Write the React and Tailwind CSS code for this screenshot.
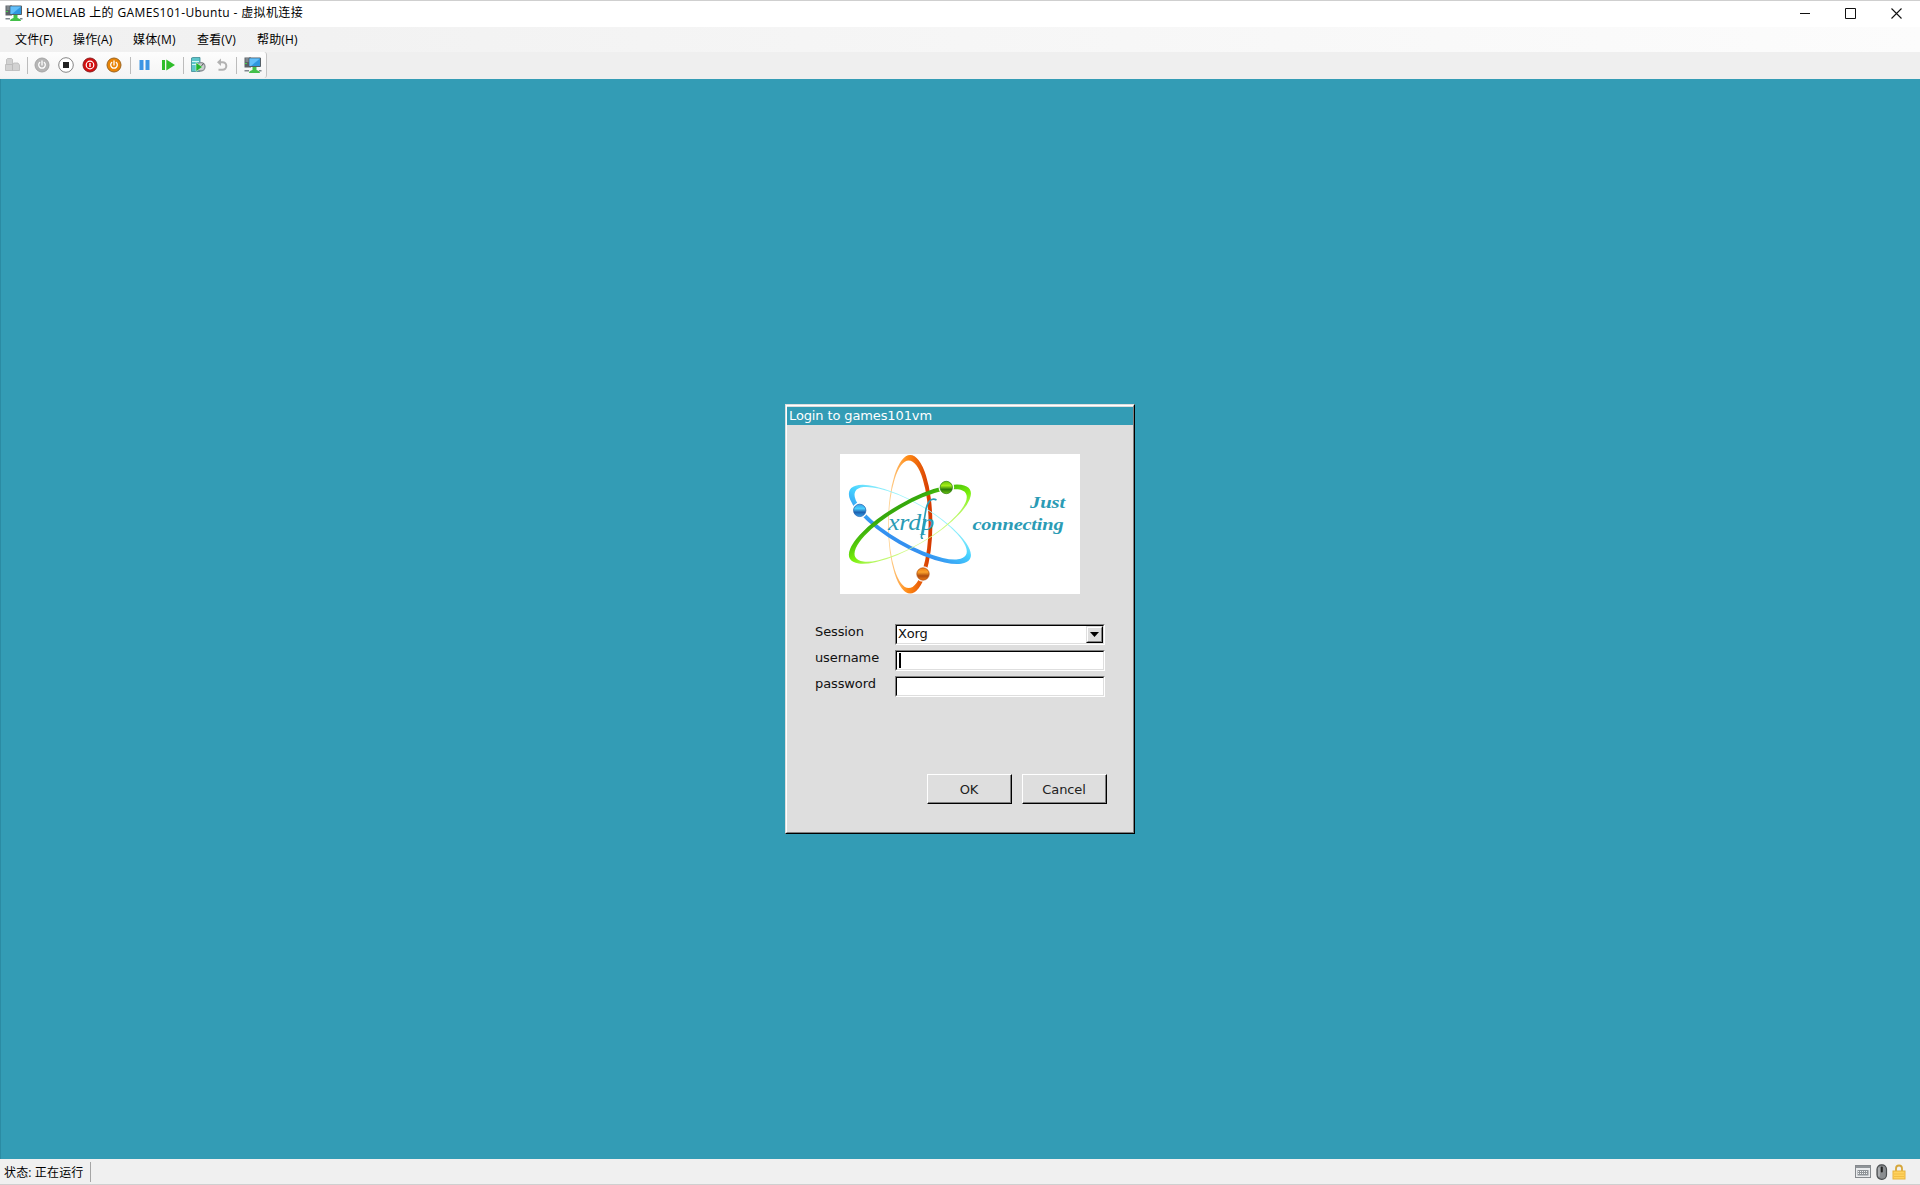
const ui = "font-['Open_Sans','Noto_Sans_CJK_SC',sans-serif]";

const Svg = ({ w = 18, h = 18, className = "", children }) => (
  <svg width={w} height={h} viewBox={`0 0 ${w} ${h}`} className={"shrink-0 " + className}>{children}</svg>
);

const VmIcon = ({ className }) => (
  <Svg className={className}>
    <path d="M.5 1.500H7v10H.5z" fill="#5b6166" />
    <path d="M1.500 3h4M1.500 5h4" stroke="#a5adb2" />
    <path d="M1 7.500h2" stroke="#45d04b" />
    <path d="M5 2h11.500v8.500H5z" fill="#2f97e0" stroke="#555f66" />
    <path d="M5.500 2.500h10.500L7 10H5.500z" fill="#62bffa" />
    <path d="M8.500 11h4v3.500h-4z" fill="#43c04a" />
    <path d="M5 17c.3-2 1.500-2.500 3.500-3h4c2 .5 3.200 1 3.500 3z" fill="#43c04a" />
    <path d="M.5 14.800h4.500M15 14.800h2.500" stroke="#7f898f" strokeWidth="1.600" />
  </Svg>
);

const PowerGlyph = () => (
  <g fill="none" stroke="#fff" strokeWidth="1.300" strokeLinecap="round">
    <path d="M8 4v4" /><path d="M5.700 5.500a3.300 3.300 0 1 0 4.600 0" />
  </g>
);

const Sep = ({ className }) => <div className={"h-[17px] w-px shrink-0 bg-[#bcbcbc] " + className} />;

function Toolbar() {
  return (
    <div className="flex h-[27px] shrink-0 bg-[#efefef]">
      <div className="flex h-[26px] w-[267px] items-center rounded-r-[3px] border-r border-[#c4c4c4] bg-linear-to-b from-[#fdfdfd] to-[#f4f4f4] pl-[5px]">
        <Svg w={15} h={16}>
          <g fill="#d2d2d2" stroke="#b9b9b9" strokeWidth=".8">
            <path d="M1.500 2.500l1-1h4l1 1v5h-6z" />
            <path d="M.5 7.500h7v6h-7zM7.500 8l1-2h4.500l1.500 2v5.500h-7z" />
          </g>
        </Svg>
        <Sep className="ml-[7px]" />
        <Svg w={16} h={16} className="ml-[6px]"><circle cx="8" cy="8" r="7" fill="#b5b5b5" stroke="#a5a5a5" /><PowerGlyph /></Svg>
        <Svg w={16} h={16} className="ml-[8px]"><circle cx="8" cy="8" r="7.300" fill="#fff" stroke="#858585" /><rect x="5" y="5" width="6" height="6" fill="#222" /></Svg>
        <Svg w={16} h={16} className="ml-[8px]">
          <circle cx="8" cy="8" r="7" fill="#d40d0d" stroke="#8a2020" />
          <circle cx="8" cy="8" r="3.800" fill="none" stroke="#fff" strokeWidth="1.200" /><path d="M8 6v4" stroke="#fff" strokeWidth="1.400" />
        </Svg>
        <Svg w={16} h={16} className="ml-[8px]"><circle cx="8" cy="8" r="7" fill="#e88406" stroke="#9c6420" /><PowerGlyph /></Svg>
        <Sep className="ml-[8px]" />
        <Svg w={12} h={16} className="ml-[8px]"><path d="M.5 3h4v10h-4zM6.500 3h4v10h-4z" fill="#3c95e4" /></Svg>
        <Svg w={14} h={16} className="ml-[11px]"><path d="M0 3h3v10H0zM4.300 2.500 13 8l-8.700 5.500z" fill="#2fbd2b" /></Svg>
        <Sep className="ml-[7px]" />
        <Svg w={16} h={16} className="ml-[6px]">
          <path d="M1.500 1l1.500-.5h7V14.500H1.500z" fill="#5cc6cb" stroke="#3f8c94" strokeWidth=".8" />
          <path d="M2 4.500h7M2 7.500h4" stroke="#d5f6f6" />
          <circle cx="10.800" cy="9.800" r="4.200" fill="#c9cdd0" stroke="#8a9094" strokeWidth="1.300" />
          <path d="m11 9.500 2.500-3" stroke="#555" />
          <path d="M6 5.500 12.500 10 6 14.500z" fill="#22b52b" stroke="#e9f7e9" strokeWidth=".5" />
        </Svg>
        <Svg w={14} h={16} className="ml-[9px]">
          <path d="M4 5.200h3.500a3.700 3.700 0 0 1 0 7.600H3.500" fill="none" stroke="#b2b2b2" strokeWidth="2" /><path d="M6 1.500v7.500L2 5.200z" fill="#b2b2b2" />
        </Svg>
        <Sep className="ml-[7px]" />
        <VmIcon className="ml-[7px]" />
      </div>
    </div>
  );
}

const Orbit = ({ turn, fill }) => (
  <path
    transform={`rotate(${turn} 70 70.300)`}
    fill={fill}
    fillRule="evenodd"
    d="M48 70.300a22.200 69.300 0 1 0 44.400 0a22.200 69.300 0 1 0 -44.400 0zM48.800 70.300a19.900 63.800 0 1 0 39.800 0a19.900 63.800 0 1 0 -39.800 0z"
  />
);

const Grad = ({ id, a, b, c }) => (
  <linearGradient id={id} gradientUnits="userSpaceOnUse" x1="48" x2="92" y1="0" y2="0">
    <stop offset="0" stopColor={a} /><stop offset=".45" stopColor={b} /><stop offset=".95" stopColor={c} />
  </linearGradient>
);

const Ball = ({ id, x, y, hi, mid, lo }) => (
  <g>
    <linearGradient id={id} x1="0" x2="0" y1="0" y2="1">
      <stop offset="0" stopColor={mid} /><stop offset=".35" stopColor={hi} /><stop offset=".65" stopColor={lo} /><stop offset="1" stopColor={mid} />
    </linearGradient>
    <circle cx={x} cy={y} r="7.800" fill="#fff" />
    <circle cx={x} cy={y} r="6.200" fill={`url(#${id})`} stroke={lo} strokeWidth=".7" />
  </g>
);

function Logo() {
  return (
    <svg width="240" height="140" viewBox="0 0 240 140" className="block bg-white">
      <defs>
        <Grad id="og" a="#ffd79a" b="#ff8a14" c="#d63a00" />
        <Grad id="bg" a="#a5f6fa" b="#45d2ff" c="#3490f0" />
        <Grad id="gg" a="#d8fb90" b="#78f00a" c="#35a80c" />
      </defs>
      <Orbit turn={0} fill="url(#og)" />
      <Orbit turn={120} fill="url(#bg)" />
      <Orbit turn={240} fill="url(#gg)" />
      <Ball id="b1" x={106.300} y={33.500} hi="#a5ee18" mid="#6cc40e" lo="#2b7c0a" />
      <Ball id="b2" x={19.700} y={56.400} hi="#4cd0ff" mid="#35a0e8" lo="#1d5fae" />
      <Ball id="b3" x={83} y={120} hi="#fba22c" mid="#ec7a14" lo="#b04c0e" />
      <g fill="#2a9bb5" className="font-['Liberation_Serif',serif] italic">
        <text x="48" y="76" fontSize="24" textLength="46" lengthAdjust="spacingAndGlyphs">xrdp</text>
        <path d="M96.500 46c-5-3-9 2-10.500 9l-4.500 27q-.4 3 1.500 2" fill="none" stroke="#2a9bb5" strokeWidth="1.600" />
        <g className="font-bold" fontSize="16">
          <text x="190" y="54" textLength="35" lengthAdjust="spacingAndGlyphs">Just</text>
          <text x="132.500" y="76" textLength="91" lengthAdjust="spacingAndGlyphs">connecting</text>
        </g>
      </g>
    </svg>
  );
}

const sunken = "border border-t-[#808080] border-l-[#808080] border-r-white border-b-white";
const sunkenInner = "flex h-full border border-t-black border-l-black border-r-[#dedede] border-b-[#dedede] bg-white";

const Row = ({ label, children }) => (
  <div className="flex h-[26px]">
    <div className="w-[80px] pt-px leading-[14px]">{label}</div>
    <div className={"h-[21px] w-[210px] " + sunken}><div className={sunkenInner}>{children}</div></div>
  </div>
);

const Btn = ({ children }) => (
  <div className="h-[30px] w-[85px] border border-t-white border-l-white border-r-black border-b-black">
    <div className="flex h-full items-center justify-center border-r border-b border-[#808080] pt-[3px] text-[#222]">{children}</div>
  </div>
);

function Login() {
  return (
    <div className="h-[430px] w-[350px] border border-t-[#dedede] border-l-[#dedede] border-r-black border-b-black bg-[#dedede] font-['DejaVu_Sans',sans-serif] text-[13px] tracking-[-0.12px] text-[#111]">
      <div className="flex h-full flex-col border border-t-white border-l-white border-r-[#808080] border-b-[#808080]">
        <div className="mt-px h-[18px] bg-[#339cb5] pl-[2px] leading-[18px] text-white">Login to games101vm</div>
        <div className="mt-[29px] ml-[53px] h-[140px] w-[240px]"><Logo /></div>
        <div className="mt-[30px] ml-[28px]">
          <Row label="Session">
            <span className="grow pl-px leading-[16px]">Xorg</span>
            <div className="h-[17px] w-[17px] border border-t-[#dedede] border-l-[#dedede] border-r-black border-b-black bg-[#dedede]">
              <div className="flex h-full items-center justify-center border border-t-white border-l-white border-r-[#808080] border-b-[#808080]">
                <svg width="9" height="5"><path d="M0 0h9L4.500 5z" /></svg>
              </div>
            </div>
          </Row>
          <Row label="username"><div className="mt-px ml-[2px] h-[15px] w-[2px] bg-black" /></Row>
          <Row label="password" />
        </div>
        <div className="mt-[72px] ml-[140px] flex gap-[10px]"><Btn>OK</Btn><Btn>Cancel</Btn></div>
      </div>
    </div>
  );
}

const menus = [["文件(F)", "w-[58px]"], ["操作(A)", "w-[60px]"], ["媒体(M)", "w-[64px]"], ["查看(V)", "w-[60px]"], ["帮助(H)", "w-[60px]"]];

export default function App() {
  return (
    <div className={"flex h-[1185px] w-[1920px] flex-col overflow-hidden border-t border-[#cfcfcf] bg-white text-[12px] text-black " + ui}>
      <div className="flex h-[26px] shrink-0 items-center pb-[2px] pl-[5px]">
        <VmIcon />
        <span className="ml-[3px] whitespace-pre leading-none tracking-[0.36px]">HOMELAB 上的 GAMES101-Ubuntu - 虚拟机连接</span>
        <div className="ml-auto flex items-center gap-[34px] pr-[18px]">
          <Svg w={11} h={11}><path d="M0 5.500h10" stroke="#111" /></Svg>
          <Svg w={11} h={11} className="mr-px"><path d="M.5.5h10v10H.5z" fill="none" stroke="#111" /></Svg>
          <Svg w={11} h={11}><path d="m.5.5 10 10m0-10-10 10" stroke="#111" strokeWidth="1.100" /></Svg>
        </div>
      </div>
      <div className="flex h-[25px] shrink-0 items-center bg-linear-to-r from-[#f0f0f0] to-[#fcfcfc] pl-[15px]">
        {menus.map(([t, w]) => <span key={t} className={"leading-none tracking-[0.15px] whitespace-nowrap " + w}>{t}</span>)}
      </div>
      <Toolbar />
      <div className="flex h-[1080px] shrink-0 items-center justify-center border-l border-[#2b8ba3] bg-[#339cb5] pr-px">
        <Login />
      </div>
      <div className="flex h-[26px] shrink-0 items-center border-b border-[#cfcfcf] bg-[#f0f0f0] pl-[4px]">
        <span className="w-[86px] pt-[2px] leading-none tracking-[0.15px] whitespace-nowrap">状态: 正在运行</span>
        <div className="h-[20px] w-px bg-[#a5a5a5]" />
        <div className="ml-auto flex items-center gap-[5px] pr-[14px]">
          <Svg w={16} h={14}>
            <rect x=".5" y=".5" width="15" height="12" fill="#e9ebed" stroke="#85898d" /><path d="M1 2h14" stroke="#8f9498" strokeWidth="2" />
            <rect x="2.500" y="5" width="11" height="5.500" fill="#8e9397" />
            <path d="M3 6.500h10M3 8.500h10" stroke="#f1f2f3" strokeDasharray="1 1" />
          </Svg>
          <Svg w={12} h={16}>
            <rect x="1" y=".8" width="9.500" height="14.500" rx="4.500" fill="#8a8d90" stroke="#4b4e50" strokeWidth="1.200" />
            <rect x="4.800" y="2.500" width="2" height="6" rx="1" fill="#222" /><path d="M3 3.500v9" stroke="#c9cbcd" />
          </Svg>
          <Svg w={14} h={16} className="-ml-px">
            <path d="M4 8V4.500a3 3 0 0 1 6 0V8" fill="none" stroke="#d5a63a" strokeWidth="1.800" />
            <rect x="1" y="7" width="12" height="8" fill="#ffd25d" stroke="#e8b23c" /><path d="M2 10h10M2 12.500h10" stroke="#f2bd45" />
          </Svg>
        </div>
      </div>
    </div>
  );
}
